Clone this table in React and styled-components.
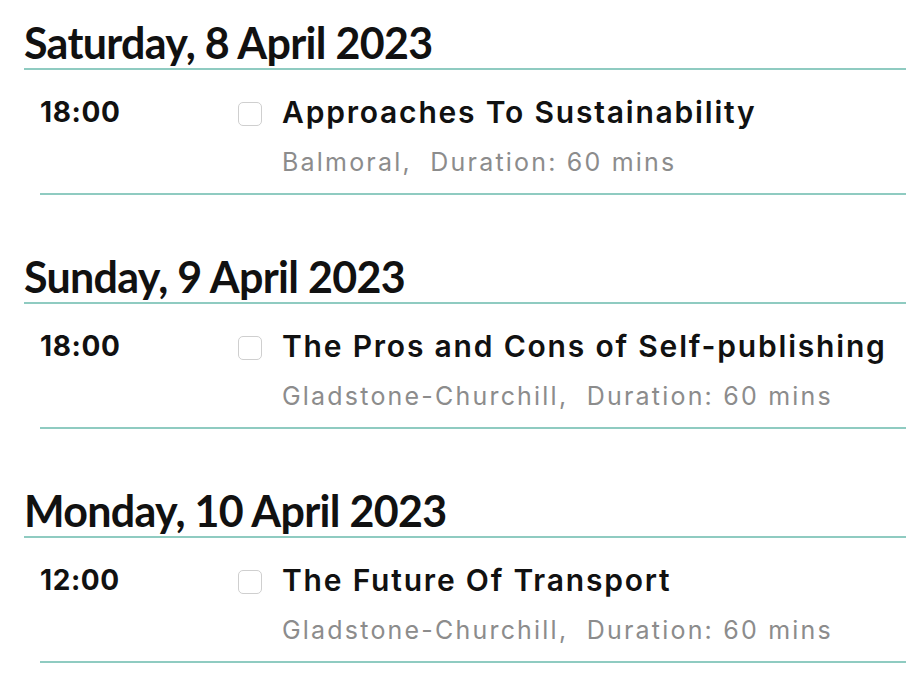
import React from 'react'
import styled, { createGlobalStyle } from 'styled-components'

const GlobalStyle = createGlobalStyle`
  body {
    margin: 0;
    background: #fff;
    font-family: 'Inter', 'Open Sans', sans-serif;
  }
`

const Page = styled.div`
  padding: 20px 0 0 24px;
`

const Day = styled.section`
  margin-bottom: 59px;

  &:last-child {
    margin-bottom: 0;
  }
`

const DayTitle = styled.h2`
  margin: 0;
  font-family: 'Lato', 'Liberation Sans', sans-serif;
  font-weight: 700;
  font-size: 43px;
  letter-spacing: -0.7px;
  line-height: 46px;
  color: #111;
  padding-bottom: 2px;
  border-bottom: 2px solid #8fcbc1;
`

const Row = styled.div`
  display: grid;
  grid-template-columns: 198px 44px 1fr;
  margin-left: 16px;
  padding: 24px 0 16px;
  border-bottom: 2px solid #8fcbc1;
`

const Time = styled.div`
  font-size: 28px;
  font-weight: 700;
  letter-spacing: 0.6px;
  line-height: 36px;
  color: #111;
`

const Check = styled.input.attrs({ type: 'checkbox' })`
  appearance: none;
  width: 24px;
  height: 24px;
  margin: 8px 0 0;
  border: 1px solid #cfcfcf;
  border-radius: 5px;
  background: #fff;
`

const Title = styled.div`
  font-size: 30px;
  font-weight: 600;
  letter-spacing: 1.8px;
  line-height: 36px;
  color: #111;
  white-space: nowrap;
`

const Meta = styled.div`
  margin-top: 17px;
  font-size: 25px;
  letter-spacing: 2.2px;
  line-height: 30px;
  color: #8c8c8c;
  white-space: nowrap;
`

const days = [
  {
    date: 'Saturday, 8 April 2023',
    time: '18:00',
    title: 'Approaches To Sustainability',
    room: 'Balmoral',
  },
  {
    date: 'Sunday, 9 April 2023',
    time: '18:00',
    title: 'The Pros and Cons of Self-publishing',
    room: 'Gladstone-Churchill',
  },
  {
    date: 'Monday, 10 April 2023',
    time: '12:00',
    title: 'The Future Of Transport',
    room: 'Gladstone-Churchill',
  },
]

const App = () => (
  <Page>
    <GlobalStyle />
    {days.map(d => (
      <Day key={d.date}>
        <DayTitle>{d.date}</DayTitle>
        <Row>
          <Time>{d.time}</Time>
          <Check />
          <div>
            <Title>{d.title}</Title>
            <Meta>{d.room},&nbsp; Duration: 60 mins</Meta>
          </div>
        </Row>
      </Day>
    ))}
  </Page>
)

export default App
